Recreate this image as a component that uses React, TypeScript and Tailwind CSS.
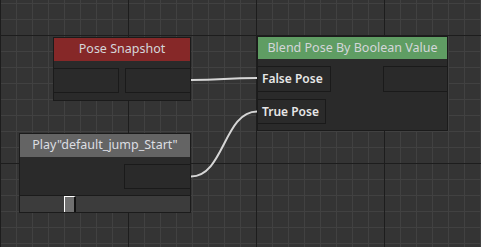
const font = { fontFamily: '"Noto Sans", "Open Sans", sans-serif' };

function PinBox({ label, className }: { label?: string; className: string }) {
  return (
    <div
      className={`border border-[#1a1a1a] bg-[#2a2a2a] flex items-center pl-[4px] text-[12px] font-semibold text-[#e6e6e6] ${className}`}
    >
      {label}
    </div>
  );
}

export default function App() {
  return (
    <div
      style={font}
      className="relative w-[481px] h-[247px] overflow-hidden bg-[#343434] bg-[image:linear-gradient(#1d1d1d_1px,transparent_1px),linear-gradient(90deg,#1d1d1d_1px,transparent_1px),linear-gradient(#414141_1px,transparent_1px),linear-gradient(90deg,#414141_1px,transparent_1px)] bg-[size:128px_128px,128px_128px,16px_16px,16px_16px] bg-[position:0_35px,0_0,0_3px,0_0]"
    >
      {/* Pose Snapshot */}
      <div className="absolute left-[53px] top-[37px] w-[138px] h-[64px] border border-[#1b1b1b] bg-[#2a2a2a] flex flex-col">
        <div className="h-[23px] bg-[#862828] flex items-center justify-center text-[12.5px] text-[#d4d6da]">
          Pose Snapshot
        </div>
        <div className="flex justify-between mt-[7px]">
          <PinBox className="w-[65px] h-[25px] border-l-0" />
          <PinBox className="w-[65px] h-[25px] border-r-0" />
        </div>
      </div>

      {/* Blend Pose By Boolean Value */}
      <div className="absolute left-[257px] top-[36px] w-[191px] h-[95px] border border-[#1b1b1b] bg-[#2a2a2a] flex flex-col">
        <div className="h-[22px] bg-[#5f9d63] flex items-center justify-center text-[12.5px] text-[#d4d6da]">
          Blend Pose By Boolean Value
        </div>
        <div className="flex justify-between mt-[7px]">
          <PinBox label="False Pose" className="w-[73px] h-[26px] border-l-0" />
          <PinBox className="w-[64px] h-[26px] border-r-0" />
        </div>
        <div className="flex mt-[7px]">
          <PinBox label="True Pose" className="w-[68px] h-[25px] border-l-0" />
        </div>
      </div>

      {/* Play node */}
      <div className="absolute left-[19px] top-[133px] w-[172px] h-[80px] border border-[#1b1b1b] bg-[#2a2a2a] flex flex-col">
        <div className="h-[23px] bg-[#646464] flex items-center justify-center text-[12.5px] text-[#dcdee2]">
          Play"default_jump_Start"
        </div>
        <div className="flex justify-end mt-[7px]">
          <PinBox className="w-[66px] h-[25px] border-r-0" />
        </div>
        <div className="mt-auto h-[17px] border-t border-[#1b1b1b] bg-[#3c3c3c] flex">
          <div className="ml-[44px] w-[12px] h-[16px] border-l border-t border-white border-r-2 border-r-[#111] bg-[#707070]" />
        </div>
      </div>

      <svg className="absolute inset-0 pointer-events-none" width="481" height="247">
        <path d="M191 80 C 224 80, 224 78, 257 78" stroke="#d6d6d6" strokeWidth="2" fill="none" />
        <path d="M191 176.5 C 224 176.5, 224 111.5, 257 111.5" stroke="#d6d6d6" strokeWidth="2" fill="none" />
      </svg>
    </div>
  );
}
